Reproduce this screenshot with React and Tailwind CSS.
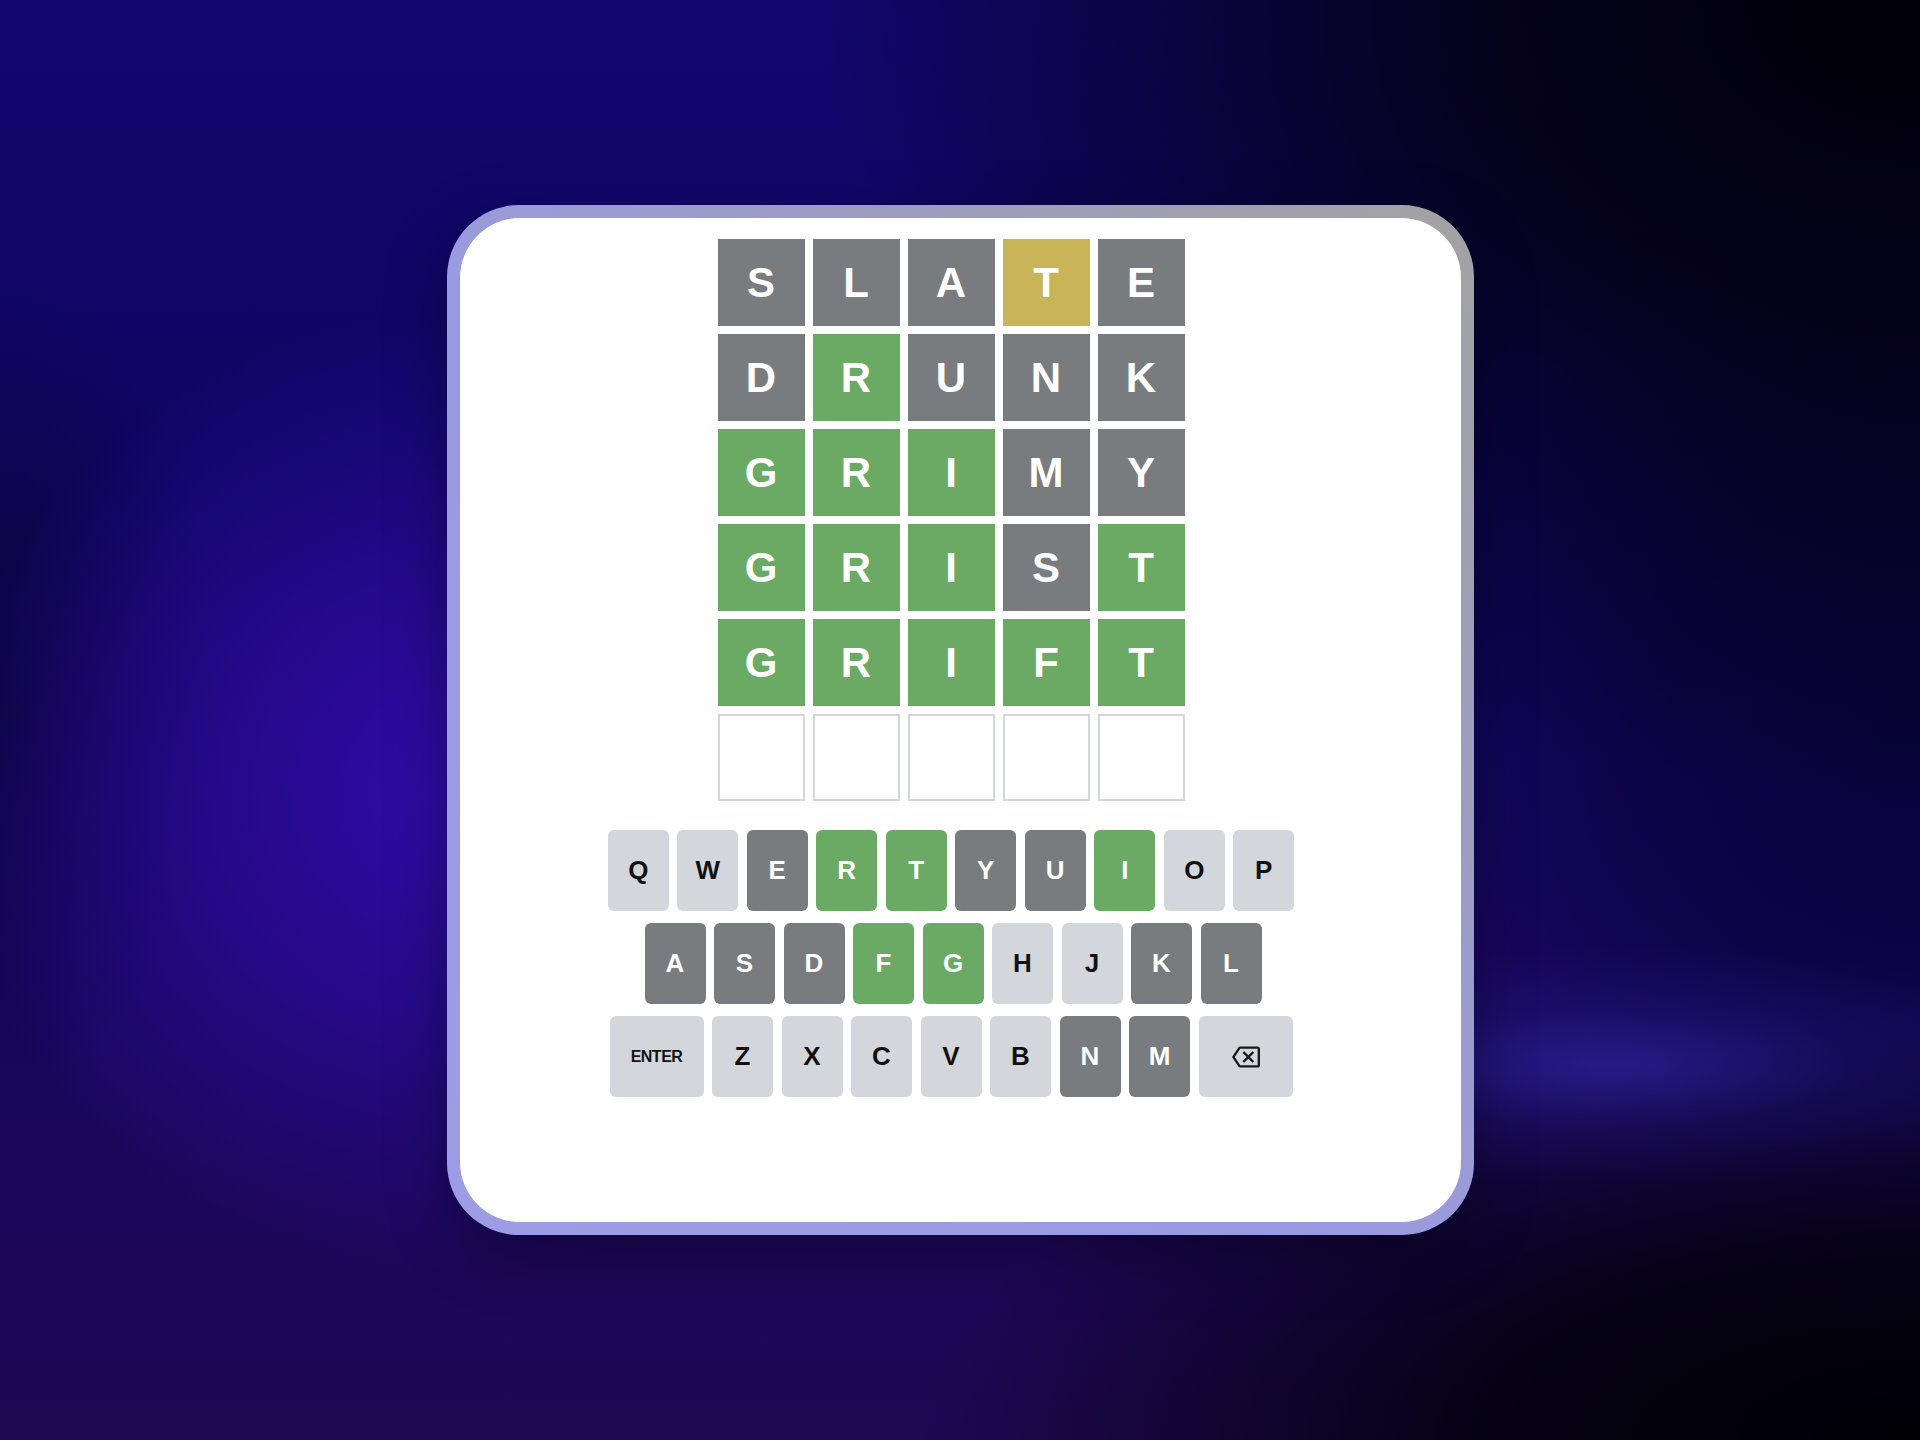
import React from 'react';

const G = 'bg-[#787c7e] text-white';
const Y = 'bg-[#c9b458] text-white';
const OK = 'bg-[#6aaa64] text-white';
const LT = 'bg-[#d3d6da] text-[#111]';

// board rows: letter + state
const board = [
  [['S', G], ['L', G], ['A', G], ['T', Y], ['E', G]],
  [['D', G], ['R', OK], ['U', G], ['N', G], ['K', G]],
  [['G', OK], ['R', OK], ['I', OK], ['M', G], ['Y', G]],
  [['G', OK], ['R', OK], ['I', OK], ['S', G], ['T', OK]],
  [['G', OK], ['R', OK], ['I', OK], ['F', OK], ['T', OK]],
];

const used = {
  E: G, Y: G, U: G, A: G, S: G, D: G, K: G, L: G, N: G, M: G,
  R: OK, T: OK, I: OK, F: OK, G: OK,
};

const rows = ['QWERTYUIOP', 'ASDFGHJKL', 'ZXCVBNM'];

const BackspaceIcon = () => (
  <svg width="28" height="28" viewBox="0 0 24 24" fill="#1a1a1b">
    <path d="M22 3H7c-.69 0-1.23.35-1.59.88L0 12l5.41 8.11c.36.53.9.89 1.59.89h15c1.1 0 2-.9 2-2V5c0-1.1-.9-2-2-2zm0 16H7.07L2.4 12l4.66-7H22v14zm-11.59-2L14 13.41 17.59 17 19 15.59 15.41 12 19 8.41 17.59 7 14 10.59 10.41 7 9 8.41 12.59 12 9 15.59z" />
  </svg>
);

const Key = ({ label, wide, children }) => (
  <button
    className={`${wide ? 'w-[94px]' : 'w-[61px]'} h-[81px] rounded-[6px] flex items-center justify-center font-bold ${
      used[label] || LT
    } ${label === 'ENTER' ? 'text-[16px] tracking-[-0.5px]' : 'text-[26px]'}`}
  >
    {children || label}
  </button>
);

export default function App() {
  return (
    <div
      className="h-screen w-full flex items-center justify-center bg-[radial-gradient(ellipse_480px_120px_at_84%_74%,rgba(48,34,155,0.7)_0%,rgba(36,24,130,0.3)_50%,transparent_100%),radial-gradient(ellipse_520px_480px_at_24%_55%,#300ca8_0%,rgba(48,12,168,0.6)_45%,transparent_100%),radial-gradient(ellipse_1100px_800px_at_100%_0%,#010008_0%,rgba(2,1,12,0.85)_40%,transparent_100%),radial-gradient(ellipse_1000px_420px_at_100%_100%,#000004_0%,rgba(0,0,6,0.8)_45%,transparent_100%),radial-gradient(ellipse_500px_500px_at_100%_50%,#07033a_0%,rgba(7,3,58,0.7)_50%,transparent_100%),radial-gradient(ellipse_220px_420px_at_0%_48%,#0c0440_0%,transparent_100%),linear-gradient(180deg,#13066e_0%,#0f0562_35%,#18075e_70%,#1f0854_100%)]"
      style={{ fontFamily: '"Liberation Sans", Arial, sans-serif' }}
    >
      {/* card with gradient frame */}
      <div className="w-[1027px] h-[1030px] rounded-[72px] p-[13px] bg-[linear-gradient(225deg,#a3a3a3_0%,#9c9cc0_30%,#9a9ae2_55%,#9d9de6_100%)] shadow-[0_20px_60px_rgba(0,0,0,0.35)]">
        <div className="w-full h-full rounded-[60px] bg-white flex flex-col items-center pt-[21px] pr-[18px]">
          {/* board */}
          <div className="flex flex-col gap-[8px]">
            {board.map((row, i) => (
              <div key={i} className="flex gap-[8px]">
                {row.map(([ch, cls], j) => (
                  <div
                    key={j}
                    className={`w-[87px] h-[87px] flex items-center justify-center text-[42px] font-bold ${cls}`}
                  >
                    {ch}
                  </div>
                ))}
              </div>
            ))}
            <div className="flex gap-[8px]">
              {[0, 1, 2, 3, 4].map((j) => (
                <div key={j} className="w-[87px] h-[87px] border-2 border-[#d3d6da]" />
              ))}
            </div>
          </div>

          {/* keyboard */}
          <div className="mt-[29px] flex flex-col items-center gap-[12px]">
            <div className="flex gap-[8.5px]">
              {rows[0].split('').map((k) => (
                <Key key={k} label={k} />
              ))}
            </div>
            <div className="flex gap-[8.5px] pl-[4px]">
              {rows[1].split('').map((k) => (
                <Key key={k} label={k} />
              ))}
            </div>
            <div className="flex gap-[8.5px]">
              <Key label="ENTER" wide />
              {rows[2].split('').map((k) => (
                <Key key={k} label={k} />
              ))}
              <Key label="BACK" wide>
                <BackspaceIcon />
              </Key>
            </div>
          </div>
        </div>
      </div>
    </div>
  );
}
